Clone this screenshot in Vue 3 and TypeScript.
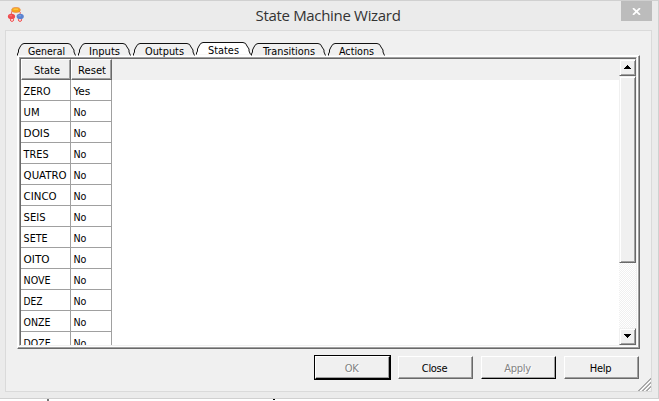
<script setup lang="ts">
interface Tab { label: string; width: number; gap: number; text: number }
interface Row { name: string; reset: string; text: number }

const tabs: Tab[] = [
  { label: 'General', width: 59, gap: 2, text: 37 },
  { label: 'Inputs', width: 53, gap: 2, text: 31 },
  { label: 'Outputs', width: 62, gap: 1, text: 39 },
  { label: 'States', width: 55, gap: 0, text: 31 },
  { label: 'Transitions', width: 75, gap: 2, text: 52 },
  { label: 'Actions', width: 57, gap: 0, text: 35 },
]
const active = 'States'

const rows: Row[] = [
  { name: 'ZERO', reset: 'Yes', text: 27 },
  { name: 'UM', reset: 'No', text: 16 },
  { name: 'DOIS', reset: 'No', text: 26 },
  { name: 'TRES', reset: 'No', text: 25 },
  { name: 'QUATRO', reset: 'No', text: 43 },
  { name: 'CINCO', reset: 'No', text: 33 },
  { name: 'SEIS', reset: 'No', text: 22 },
  { name: 'SETE', reset: 'No', text: 24 },
  { name: 'OITO', reset: 'No', text: 26 },
  { name: 'NOVE', reset: 'No', text: 27 },
  { name: 'DEZ', reset: 'No', text: 19 },
  { name: 'ONZE', reset: 'No', text: 27 },
  { name: 'DOZE', reset: 'No', text: 27 },
]

function outline(w: number): string {
  return `M.5 12.5 V11 L1.5 9 V7 L3 4 Q4.5 .5 7 .5 H${w - 8} Q${w - 5} .5 ${w - 4} 4 L${w - 2} 7 V9 L${w - 0.5} 12.5`
}
</script>

<template>
  <div class="page">
    <div class="window">
      <header class="titlebar">
        <svg class="logo" width="18" height="18" viewBox="0 0 18 18">
          <path d="M5 4 L4 8 M12 4 q2 0 1 4" fill="none" stroke="#ee6560" stroke-width="1" />
          <circle cx="5" cy="12.8" r="1.6" fill="#fbe9e9" stroke="#f04b4b" />
          <circle cx="13" cy="12.8" r="1.6" fill="#fbe9e9" stroke="#f04b4b" />
          <ellipse cx="4.5" cy="9.5" rx="3.6" ry="2.7" fill="#ef4a4e" />
          <ellipse cx="13.2" cy="9.5" rx="3.6" ry="2.7" fill="#5b82d1" />
          <ellipse cx="9" cy="2.9" rx="4.3" ry="2.5" fill="#f5a51c" stroke="#e87830" stroke-width=".6" />
          <path d="M6.5 2.2 H11" stroke="#ffd050" />
          <path d="M2.5 8.8 H5 M11.5 8.8 H14" stroke="#fff" stroke-opacity=".3" />
        </svg>
        <h1>State Machine Wizard</h1>
        <button class="close" aria-label="Close window">
          <svg width="9" height="7" viewBox="0 0 9 7"><path d="M1 .2 L8 6.8 M8 .2 L1 6.8" stroke="#fff" stroke-width="1.8" /></svg>
        </button>
      </header>

      <main class="client">
        <nav class="tabs">
          <div
            v-for="t in tabs"
            :key="t.label"
            class="tab"
            :class="{ active: t.label === active }"
            :style="{ width: t.width + 'px', marginRight: t.gap + 'px' }"
          >
            <svg class="shape" :width="t.width" height="13" :viewBox="`0 0 ${t.width} 13`">
              <path :d="outline(t.width)" :fill="t.label === active ? '#fff' : '#f0f0f0'" stroke="#111" />
            </svg>
            <svg class="label" :width="t.text" height="15">
              <text x="0" y="11" :textLength="t.text" lengthAdjust="spacingAndGlyphs">{{ t.label }}</text>
            </svg>
          </div>
        </nav>

        <section class="pane">
          <div class="sunken">
            <div class="grid">
              <div class="head">
                <div class="th first">
                  <svg width="26" height="15"><text x="0" y="12" textLength="26" lengthAdjust="spacingAndGlyphs">State</text></svg>
                </div>
                <div class="th second">
                  <svg width="28" height="15"><text x="0" y="12" textLength="28" lengthAdjust="spacingAndGlyphs">Reset</text></svg>
                </div>
              </div>
              <div v-for="r in rows" :key="r.name" class="row">
                <div class="td first">
                  <svg :width="r.text + 2" height="15"><text x="0.6" y="11" :textLength="r.text" lengthAdjust="spacingAndGlyphs">{{ r.name }}</text></svg>
                </div>
                <div class="td second">
                  <svg width="20" height="15"><text x="0.4" y="11" :textLength="r.reset === 'Yes' ? 17 : 13" lengthAdjust="spacingAndGlyphs">{{ r.reset }}</text></svg>
                </div>
              </div>
            </div>
            <div class="scrollbar">
              <div class="box arrow">
                <svg width="7" height="4" viewBox="0 0 7 4" shape-rendering="crispEdges"><path d="M3 0h1v1h1v1h1v1h1v1H0V3h1V2h1V1h1z" /></svg>
              </div>
              <div class="box thumb"></div>
              <div class="track"></div>
              <div class="box arrow">
                <svg width="7" height="4" viewBox="0 0 7 4" shape-rendering="crispEdges"><path d="M0 0h7v1H6v1H5v1H4v1H3V3H2V2H1V1H0z" /></svg>
              </div>
            </div>
          </div>
        </section>

        <footer class="actions">
          <button class="btn default" disabled><span>OK</span></button>
          <button class="btn"><span>Close</span></button>
          <button class="btn apply" disabled><span>Apply</span></button>
          <button class="btn"><span>Help</span></button>
        </footer>
        <svg class="grip" width="13" height="13" viewBox="0 0 13 13">
          <path d="M2 13 L13 2 M6 13 L13 6 M10 13 L13 10" stroke="#fff" stroke-width="1" />
          <path d="M0 13 L13 0 M1 13 L13 1 M4 13 L13 4 M5 13 L13 5 M8 13 L13 8 M9 13 L13 9" stroke="#a0a0a0" stroke-width=".9" />
        </svg>
      </main>
    </div>
    <div class="beneath">
      <i class="mark"></i>
      <i class="tick"></i>
    </div>
  </div>
</template>

<style>
body {
  margin: 0;
  overflow: hidden;
}
</style>

<style scoped>
* {
  box-sizing: border-box;
}
.page {
  width: 659px;
  height: 401px;
  overflow: hidden;
  background: #fff;
  font: 11px/15px "DejaVu Sans Condensed", "DejaVu Sans", sans-serif;
  font-stretch: condensed;
  color: #000;
}
svg {
  display: block;
  flex: none;
}
.window {
  width: 659px;
  height: 399px;
  padding: 0 6px 7px 5px;
  background: #ebebeb;
  border: solid #d0d0d0;
  border-width: 1px 1px 1px 0;
}
.titlebar {
  display: flex;
  align-items: flex-start;
  height: 29px;
}
.logo {
  margin: 6px 0 0 2px;
}
h1 {
  flex: 1;
  margin: 4px 0 0 10px;
  text-align: center;
  font: 400 15px/21px "Open Sans", "Noto Sans", sans-serif;
  letter-spacing: -0.32px;
  color: #333;
}
.close {
  display: flex;
  align-items: center;
  justify-content: center;
  width: 31px;
  height: 20px;
  padding: 0;
  border: 0;
  background: #bcbcbc;
}
.client {
  position: relative;
  width: 647px;
  height: 362px;
  padding: 11px 11px 0 11px;
  background: #f0f0f0;
  border: 1px solid #dadada;
}
.tabs {
  display: flex;
  align-items: flex-end;
  height: 13px;
}
.tab {
  display: flex;
  justify-content: center;
  position: relative;
  height: 12px;
}
.tab.active {
  height: 13px;
}
.shape {
  position: absolute;
  left: 0;
  top: 0;
}
.label {
  position: relative;
  margin-top: 1px;
  overflow: visible;
}
.pane {
  width: 623px;
  height: 294px;
  padding: 1px 2px 2px 1px;
  border: solid;
  border-width: 1px;
  border-color: #fff #696969 #696969 #fff;
  box-shadow: inset -1px -1px #a0a0a0;
  background: #fff;
}
.sunken {
  display: flex;
  width: 618px;
  height: 289px;
  padding: 1px 0 0 1px;
  background: #696969;
  border: 1px solid;
  border-color: #a0a0a0 #f0f0f0 #f0f0f0 #a0a0a0;
  overflow: hidden;
}
.grid {
  flex: 1;
  overflow: hidden;
  background: #fff;
}
.head {
  display: flex;
  height: 21px;
  background: #f0f0f0;
}
.th {
  display: flex;
  align-items: center;
  justify-content: center;
  height: 21px;
  padding-left: 1px;
  border: solid;
  border-width: 1px;
  border-color: #fff #696969 #696969 #fff;
  box-shadow: inset -1px -1px #a0a0a0;
}
.first {
  width: 50px;
}
.second {
  width: 41px;
}
.row {
  display: flex;
  height: 21px;
}
.td {
  padding: 4px 0 0 2px;
  border: solid #a0a0a0;
  border-width: 0 1px 1px 0;
}
.scrollbar {
  display: flex;
  flex-direction: column;
  width: 17px;
  background: #fff;
}
.box {
  background: #f0f0f0;
  border: solid;
  border-width: 1px;
  border-color: #f0f0f0 #696969 #696969 #f0f0f0;
  box-shadow: inset 1px 1px #fff, inset -1px -1px #a0a0a0;
}
.arrow {
  display: flex;
  align-items: center;
  justify-content: center;
  height: 17px;
  padding-bottom: 2px;
}
.thumb {
  height: 187px;
}
.track {
  flex: 1;
  background: repeating-conic-gradient(#f0f0f0 0 25%, #fff 0 50%) 0 0 / 2px 2px;
}
.actions {
  display: flex;
  justify-content: flex-end;
  gap: 8px;
  padding: 7px 1px 0 0;
}
.btn {
  width: 75px;
  height: 23px;
  padding: 1px 0 0;
  font: inherit;
  font-stretch: condensed;
  letter-spacing: -0.3px;
  color: #000;
  background: #f0f0f0;
  border: solid;
  border-width: 1px;
  border-color: #fff #696969 #696969 #fff;
  box-shadow: inset -1px -1px #a0a0a0;
}
.btn span {
  display: block;
  padding: 1px 2px 0 0;
}
.btn:disabled {
  color: #838383;
  text-shadow: 1px 1px #fff;
}
.btn.default {
  outline: 1px solid #000;
  border-color: #fff #000 #000 #fff;
}
.btn.apply {
  border-color: #fff #000 #000 #fff;
}
.grip {
  position: absolute;
  right: 0;
  bottom: 0;
}
.beneath {
  display: flex;
  height: 2px;
}
.mark {
  width: 2px;
  height: 2px;
  margin-left: 47px;
  background: #777;
}
.tick {
  width: 2px;
  height: 1px;
  margin-left: 224px;
  background: #000;
}
</style>
